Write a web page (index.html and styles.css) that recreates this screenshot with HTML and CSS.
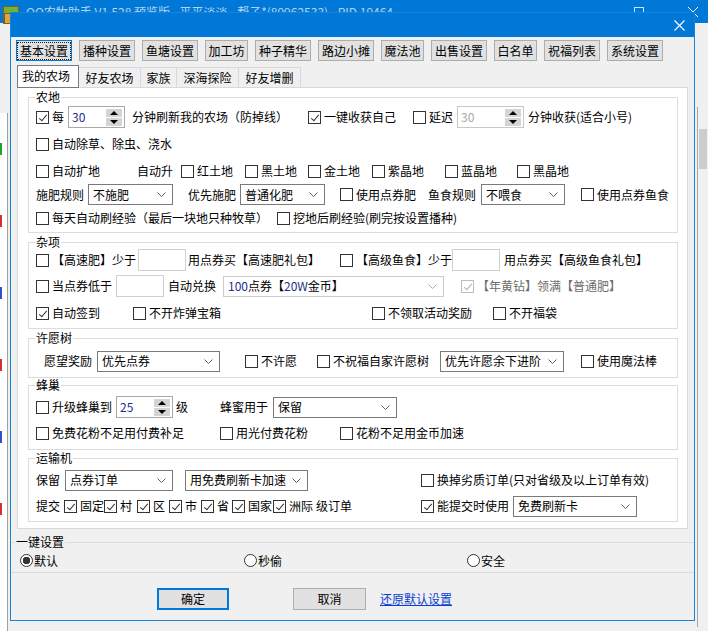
FILE: index.html
```html
<!DOCTYPE html>
<html lang="zh-CN">
<head>
<meta charset="utf-8">
<title>QQ农牧助手</title>
<link rel="stylesheet" href="styles.css">
</head>
<body>
<div class="desk">
  <div class="main-win">
    <div class="main-title">
      <svg class="app-icon" width="16" height="18" viewBox="0 0 16 18"><rect x="0" y="0" width="16" height="18" fill="#8a5a1c"/><rect x="1" y="1" width="14" height="6" fill="#6fb33a"/><rect x="2" y="8" width="5" height="9" fill="#d9a441"/><rect x="9" y="8" width="5" height="9" fill="#c47b22"/></svg>
      <span class="main-title-text">QQ农牧助手 V1.528 预览版 - 平平淡淡 - 帮子*(89962533) - PID 19464</span>
      <span class="main-ctrls"><span class="mc-max"></span><svg width="10" height="10" viewBox="0 0 10 10"><path d="M0 0L10 10M10 0L0 10" stroke="#fff" stroke-width="1"/></svg></span>
    </div>
    <div class="main-body">
      <div class="main-left">
        <div class="ml-list">
          <span class="mark green"></span>
          <span class="mark red"></span>
          <span class="mark blue"></span>
          <span class="mark red"></span>
          <span class="mark blue"></span>
          <span class="mark red"></span>
        </div>
      </div>
      <div class="main-right">
        <div class="mr-scroll"><div class="mr-thumb"></div></div>
      </div>
    </div>
    <div class="main-status">
      <span class="st st1">在[0]: 规划件值【农场】经验+3</span>
      <span class="st st2">操作次数: 12</span>
      <span class="st st3">在线时间: 00:10:35</span>
      <span class="st st4">服务器时间: 2020-02-20 00:12:00</span>
    </div>
  </div>

  <div class="dlg">
    <div class="dlg-title">
      <svg class="dlg-close" width="11" height="11" viewBox="0 0 11 11"><path d="M0.5 0.5L10.5 10.5M10.5 0.5L0.5 10.5" stroke="#fff" stroke-width="1.1"/></svg>
    </div>
    <div class="dlg-body">
      <div class="topbtns">
        <span class="tbtn w4 focus"><span class="focus-rect">基本设置</span></span>
        <span class="tbtn w4">播种设置</span>
        <span class="tbtn w4">鱼塘设置</span>
        <span class="tbtn w3">加工坊</span>
        <span class="tbtn w4">种子精华</span>
        <span class="tbtn w4">路边小摊</span>
        <span class="tbtn w3">魔法池</span>
        <span class="tbtn w4">出售设置</span>
        <span class="tbtn w3">白名单</span>
        <span class="tbtn w4">祝福列表</span>
        <span class="tbtn w4">系统设置</span>
      </div>

      <div class="tabs">
        <span class="tab sel">我的农场</span>
        <span class="tab">好友农场</span>
        <span class="tab">家族</span>
        <span class="tab">深海探险</span>
        <span class="tab">好友增删</span>
      </div>

      <div class="panel">
        <fieldset class="grp g-farm">
          <legend>农地</legend>
          <div class="rows">
            <div class="row r-f1">
              <span class="ck"><i class="box on"></i>每</span>
              <span class="spin"><span class="val">30</span><span class="arr"><i class="up"></i><i class="dn"></i></span></span>
              <span>分钟刷新我的农场（防掉线）</span>
              <span class="ck"><i class="box on"></i>一键收获自己</span>
              <span class="ck"><i class="box"></i>延迟</span>
              <span class="spin wide off"><span class="val">30</span><span class="arr"><i class="up"></i><i class="dn"></i></span></span>
              <span>分钟收获(适合小号)</span>
            </div>
            <div class="row">
              <span class="ck"><i class="box"></i>自动除草、除虫、浇水</span>
            </div>
            <div class="row r-f3">
              <span class="ck"><i class="box"></i>自动扩地</span>
              <span>自动升</span>
              <span class="ck"><i class="box"></i>红土地</span>
              <span class="ck"><i class="box"></i>黑土地</span>
              <span class="ck"><i class="box"></i>金土地</span>
              <span class="ck"><i class="box"></i>紫晶地</span>
              <span class="ck"><i class="box"></i>蓝晶地</span>
              <span class="ck"><i class="box"></i>黑晶地</span>
            </div>
            <div class="row r-f4">
              <span>施肥规则</span>
              <span class="sel s85">不施肥<svg class="chev" width="9" height="5" viewBox="0 0 9 5"><path d="M0.5 0.5L4.5 4.5L8.5 0.5" fill="none" stroke="#606060"/></svg></span>
              <span>优先施肥</span>
              <span class="sel s85">普通化肥<svg class="chev" width="9" height="5" viewBox="0 0 9 5"><path d="M0.5 0.5L4.5 4.5L8.5 0.5" fill="none" stroke="#606060"/></svg></span>
              <span class="ck"><i class="box"></i>使用点券肥</span>
              <span>鱼食规则</span>
              <span class="sel s84">不喂食<svg class="chev" width="9" height="5" viewBox="0 0 9 5"><path d="M0.5 0.5L4.5 4.5L8.5 0.5" fill="none" stroke="#606060"/></svg></span>
              <span class="ck"><i class="box"></i>使用点券鱼食</span>
            </div>
            <div class="row r-f5">
              <span class="ck"><i class="box"></i>每天自动刷经验（最后一块地只种牧草）</span>
              <span class="ck"><i class="box"></i>挖地后刷经验(刷完按设置播种)</span>
            </div>
          </div>
        </fieldset>

        <fieldset class="grp g-misc">
          <legend>杂项</legend>
          <div class="rows">
            <div class="row r-m1">
              <span class="ck"><i class="box"></i>【高速肥】少于</span>
              <span class="edit"></span>
              <span>用点券买【高速肥礼包】</span>
              <span class="ck"><i class="box"></i>【高级鱼食】少于</span>
              <span class="edit"></span>
              <span>用点券买【高级鱼食礼包】</span>
            </div>
            <div class="row r-m2">
              <span class="ck"><i class="box"></i>当点券低于</span>
              <span class="edit"></span>
              <span>自动兑换</span>
              <span class="sel s221 dim"><span><span class="num">100</span>点券【<span class="num">20W</span>金币】</span><svg class="chev" width="9" height="5" viewBox="0 0 9 5"><path d="M0.5 0.5L4.5 4.5L8.5 0.5" fill="none" stroke="#a8a8a8"/></svg></span>
              <span class="ck dis"><i class="box on"></i>【年黄钻】领满【普通肥】</span>
            </div>
            <div class="row r-m3">
              <span class="ck"><i class="box on"></i>自动签到</span>
              <span class="ck"><i class="box"></i>不开炸弹宝箱</span>
              <span class="ck"><i class="box"></i>不领取活动奖励</span>
              <span class="ck"><i class="box"></i>不开福袋</span>
            </div>
          </div>
        </fieldset>

        <fieldset class="grp g-wish">
          <legend>许愿树</legend>
          <div class="rows">
            <div class="row r-w1">
              <span class="indent">愿望奖励</span>
              <span class="sel s123">优先点券<svg class="chev" width="9" height="5" viewBox="0 0 9 5"><path d="M0.5 0.5L4.5 4.5L8.5 0.5" fill="none" stroke="#606060"/></svg></span>
              <span class="ck"><i class="box"></i>不许愿</span>
              <span class="ck"><i class="box"></i>不祝福自家许愿树</span>
              <span class="sel s124">优先许愿余下进阶<svg class="chev" width="9" height="5" viewBox="0 0 9 5"><path d="M0.5 0.5L4.5 4.5L8.5 0.5" fill="none" stroke="#606060"/></svg></span>
              <span class="ck"><i class="box"></i>使用魔法棒</span>
            </div>
          </div>
        </fieldset>

        <fieldset class="grp g-hive">
          <legend>蜂巢</legend>
          <div class="rows">
            <div class="row r-b1">
              <span class="ck"><i class="box"></i>升级蜂巢到</span>
              <span class="spin"><span class="val">25</span><span class="arr"><i class="up"></i><i class="dn"></i></span></span>
              <span>级</span>
              <span>蜂蜜用于</span>
              <span class="sel s124">保留<svg class="chev" width="9" height="5" viewBox="0 0 9 5"><path d="M0.5 0.5L4.5 4.5L8.5 0.5" fill="none" stroke="#606060"/></svg></span>
            </div>
            <div class="row r-b2">
              <span class="ck"><i class="box"></i>免费花粉不足用付费补足</span>
              <span class="ck"><i class="box"></i>用光付费花粉</span>
              <span class="ck"><i class="box"></i>花粉不足用金币加速</span>
            </div>
          </div>
        </fieldset>

        <fieldset class="grp g-trans">
          <legend>运输机</legend>
          <div class="rows">
            <div class="row r-t1">
              <span>保留</span>
              <span class="sel s108">点券订单<svg class="chev" width="9" height="5" viewBox="0 0 9 5"><path d="M0.5 0.5L4.5 4.5L8.5 0.5" fill="none" stroke="#606060"/></svg></span>
              <span class="sel s123">用免费刷新卡加速<svg class="chev" width="9" height="5" viewBox="0 0 9 5"><path d="M0.5 0.5L4.5 4.5L8.5 0.5" fill="none" stroke="#606060"/></svg></span>
              <span class="ck"><i class="box"></i>换掉劣质订单(只对省级及以上订单有效)</span>
            </div>
            <div class="row r-t2">
              <span>提交</span>
              <span class="ck"><i class="box on"></i>固定</span>
              <span class="ck"><i class="box on"></i>村</span>
              <span class="ck"><i class="box on"></i>区</span>
              <span class="ck"><i class="box on"></i>市</span>
              <span class="ck"><i class="box on"></i>省</span>
              <span class="ck"><i class="box on"></i>国家</span>
              <span class="ck"><i class="box on"></i>洲际</span>
              <span>级订单</span>
              <span class="ck"><i class="box on"></i>能提交时使用</span>
              <span class="sel s124">免费刷新卡<svg class="chev" width="9" height="5" viewBox="0 0 9 5"><path d="M0.5 0.5L4.5 4.5L8.5 0.5" fill="none" stroke="#606060"/></svg></span>
            </div>
          </div>
        </fieldset>
      </div>

      <fieldset class="quick">
        <legend>一键设置</legend>
        <div class="quick-row">
          <span class="rad"><i class="dot on"></i>默认</span>
          <span class="rad"><i class="dot"></i>秒偷</span>
          <span class="rad"><i class="dot"></i>安全</span>
        </div>
      </fieldset>

      <div class="actions">
        <span class="btn default">确定</span>
        <span class="btn">取消</span>
        <span class="link">还原默认设置</span>
      </div>
    </div>
  </div>
</div>
</body>
</html>
```

FILE: styles.css
```css
* { box-sizing: border-box; }
html, body { margin: 0; padding: 0; }
body {
  width: 708px;
  height: 631px;
  overflow: hidden;
  font-family: "Noto Sans CJK SC", "Microsoft YaHei", sans-serif;
  font-size: 12px;
  line-height: 14px;
  color: #000;
  background: #f0f0f0;
}
.desk { position: relative; width: 708px; height: 631px; overflow: hidden; }

/* ---------- background main window ---------- */
.main-win {
  width: 708px; height: 631px;
  display: flex; flex-direction: column;
  background: #f0f0f0;
}
.main-title {
  height: 23px; flex: none;
  background: #0078d7;
  display: flex; align-items: center;
  padding-left: 3px;
  color: rgba(255,255,255,0.7);
}
.app-icon { flex: none; margin-top: 6px; }
.main-title-text { margin-left: 7px; white-space: nowrap; }
.main-ctrls { margin-left: auto; display: flex; align-items: center; gap: 44px; padding-right: 10px; }
.mc-max { width: 10px; height: 10px; border: 1px solid rgba(255,255,255,0.8); }
.main-body { flex: 1; display: flex; justify-content: space-between; }
.main-left { width: 10px; padding-top: 90px; }
.ml-list { width: 8px; height: 520px; background: #fff; border-right: 1px solid #a0a0a0; display: flex; flex-direction: column; gap: 60px; padding-top: 30px; }
.mark { width: 2px; height: 12px; }
.mark.green { background: #1fa32a; }
.mark.red { background: #d03030; }
.mark.blue { background: #3050d0; }
.main-right { width: 14px; padding-top: 84px; display: flex; justify-content: flex-end; }
.mr-scroll { width: 11px; height: 520px; background: #f0f0f0; border-left: 1px solid #a8a8a8; padding: 22px 1px 0 1px; }
.mr-thumb { height: 40px; background: #cdcdcd; }
.main-status {
  height: 20px; flex: none;
  display: flex; align-items: center;
  border-top: 1px solid #d7d7d7;
  white-space: nowrap;
}
.st { padding-left: 4px; border-right: 1px solid #d0d0d0; height: 100%; display: flex; align-items: center; }
.st1 { width: 224px; }
.st2 { width: 110px; }
.st3 { width: 120px; }
.st4 { flex: 1; border-right: none; }

/* ---------- dialog ---------- */
.dlg {
  position: absolute; left: 10px; top: 12px;
  width: 685px; height: 609px;
  border: 1px solid #1883d7;
  background: #f0f0f0;
  display: flex; flex-direction: column;
}
.dlg-title {
  height: 24px; flex: none;
  background: #0078d7;
  display: flex; align-items: center; justify-content: flex-end;
  padding-right: 9px;
}
.dlg-body { flex: 1; display: flex; flex-direction: column; padding: 0 6px; }

.topbtns { display: flex; gap: 7px; margin-top: 3px; margin-left: -1px; }
.tbtn {
  height: 21px;
  border: 1px solid #adadad;
  background: #e1e1e1;
  display: flex; align-items: center; justify-content: center;
  white-space: nowrap;
}
.tbtn.w4 { width: 56px; }
.tbtn.w3 { width: 43px; }
.tbtn.focus { border-color: #0078d7; }
.focus-rect { outline: 1px dotted #222; outline-offset: 1px; padding: 0 1px; }

.tabs { display: flex; align-items: flex-end; height: 22px; margin-top: 4px; }
.tab {
  height: 20px;
  padding: 0 6px;
  border: 1px solid #d9d9d9; border-bottom: none;
  background: #f0f0f0;
  display: flex; align-items: center; justify-content: center;
  white-space: nowrap;
  margin-left: -1px;
}
.tab:first-child { margin-left: 0; }
.tab.sel {
  height: 23px; margin-bottom: -1px;
  background: #fff;
  position: relative; z-index: 1;
  width: 62px;
  align-items: flex-start; padding-top: 3px;
}
.tab + .tab { width: 63px; }
.tab:nth-child(3) { width: 37px; }

.panel {
  height: 442px;
  border: 1px solid #d9d9d9;
  background: #fff;
  padding: 2px 9px 0 10px;
  display: flex; flex-direction: column;
}

.grp {
  margin: 0; padding: 0 0 0 7px;
  border: 1px solid #dcdcdc;
  min-width: 0;
}
.grp legend, .quick legend {
  padding: 0 1px; margin-left: -1px;
  line-height: 14px; font-size: 12px;
}
.g-misc { margin-top: 2px; }
.g-wish { margin-top: 2px; }
.g-hive { margin-top: 0; }
.g-trans { margin-top: 1px; }

.rows { display: grid; }
.g-farm .rows { grid-template-rows: 26px 28px 26px 20px 28px; }
.g-misc .rows { grid-template-rows: 22px 30px 24px; padding-bottom: 3px; }
.g-wish .rows { grid-template-rows: 32px; }
.g-hive .rows { grid-template-rows: 30px 22px; padding-bottom: 5px; }
.g-trans .rows { grid-template-rows: 30px 22px; padding-bottom: 4px; }

.row { display: grid; align-items: center; white-space: nowrap; grid-auto-flow: column; justify-content: start; }
.r-f1 { grid-template-columns: 32px 64px 176px 105px 44px 71px auto; }
.r-f3 { grid-template-columns: 101px 44px 64px 63px 64px 73px 72px auto; }
.r-f4 { grid-template-columns: 52px 100px 52px 100px 88px 53px 100px auto; }
.r-f5 { grid-template-columns: 241px auto; }
.r-m1 { grid-template-columns: 102px 50px 152px 112px 52px auto; }
.r-m2 { grid-template-columns: 80px 52px 55px 238px auto; }
.r-m3 { grid-template-columns: 97px 239px 121px auto; }
.r-w1 { grid-template-columns: 61px 148px 72px 123px 141px auto; }
.r-b1 { grid-template-columns: 80px 60px 44px 53px auto; }
.r-b2 { grid-template-columns: 184px 120px auto; }
.r-t1 { grid-template-columns: 29px 120px 236px auto; }
.r-t2 { grid-template-columns: 28px 40px 33px 32px 32px 31px 41px 43px 105px 92px auto; }
.indent { padding-left: 8px; }

/* checkbox */
.ck { display: flex; align-items: center; white-space: nowrap; }
.box {
  width: 13px; height: 13px; flex: none;
  border: 1px solid #333;
  background: #fff;
  margin-right: 3px;
  position: relative;
}
.box.on::after {
  content: "";
  position: absolute; left: 4px; top: 1px;
  width: 3px; height: 7px;
  border: solid #333; border-width: 0 1px 1px 0;
  transform: rotate(40deg);
}
.ck.dis { color: #6d6d6d; }
.ck.dis .box { border-color: #bcbcbc; }
.ck.dis .box.on::after { border-color: #b0b0b0; }

/* spinner */
.spin {
  width: 57px; height: 22px;
  border: 1px solid #a9a9a9;
  background: #fff;
  display: flex; align-items: center; justify-content: space-between;
  padding: 0 2px 0 3px;
}
.spin.wide { width: 67px; border-color: #c8c8c8; }
.spin .val { color: #1b2f86; }
.spin.off .val { color: #a8a8a8; }
.arr { display: flex; flex-direction: column; gap: 1px; }
.arr i {
  width: 16px; height: 8px;
  background: #d4d4d4;
  display: flex; align-items: center; justify-content: center;
}
.arr i::before {
  content: "";
  border-left: 4px solid transparent; border-right: 4px solid transparent;
}
.arr .up::before { border-bottom: 4px solid #000; }
.arr .dn::before { border-top: 4px solid #000; }

/* select */
.sel {
  height: 21px;
  border: 1px solid #7a7a7a;
  background: #fff;
  display: flex; align-items: center; justify-content: space-between;
  padding: 0 6px 0 4px;
  white-space: nowrap;
}
.sel.dim { border-color: #cccccc; }
.sel.s84 { width: 84px; }
.sel.s85 { width: 85px; }
.sel.s108 { width: 108px; }
.sel.s123 { width: 123px; }
.sel.s124 { width: 124px; }
.sel.s221 { width: 221px; }
.chev { flex: none; }
.num { color: #1b2f86; }

/* edit */
.edit { width: 48px; height: 22px; border: 1px solid #d0d0d0; background: #fff; }

/* quick settings */
.quick {
  margin: 6px -6px 0 -6px;
  padding: 0 0 0 9px;
  border: none;
  border-top: 1px solid #dcdcdc;
  border-bottom: 1px solid #dcdcdc;
  min-width: 0;
}
.quick legend { margin-left: -5px; }
.quick-row { height: 23px; display: grid; grid-template-columns: 224px 223px auto; align-items: center; }
.rad { display: flex; align-items: center; }
.dot {
  width: 13px; height: 13px; flex: none;
  border: 1px solid #333; border-radius: 50%;
  background: #fff;
  margin-right: 1px;
}
.dot.on { background: radial-gradient(circle, #333 0, #333 3.5px, #fff 4px); }

.actions { display: flex; align-items: center; margin-top: 15px; padding-left: 140px; }
.btn {
  width: 73px; height: 22px;
  border: 1px solid #adadad;
  background: #e1e1e1;
  display: flex; align-items: center; justify-content: center;
}
.btn.default { width: 72px; border: 2px solid #0078d7; margin-right: 64px; }
.link { margin-left: 14px; color: #0a3fd6; text-decoration: underline; }
```
